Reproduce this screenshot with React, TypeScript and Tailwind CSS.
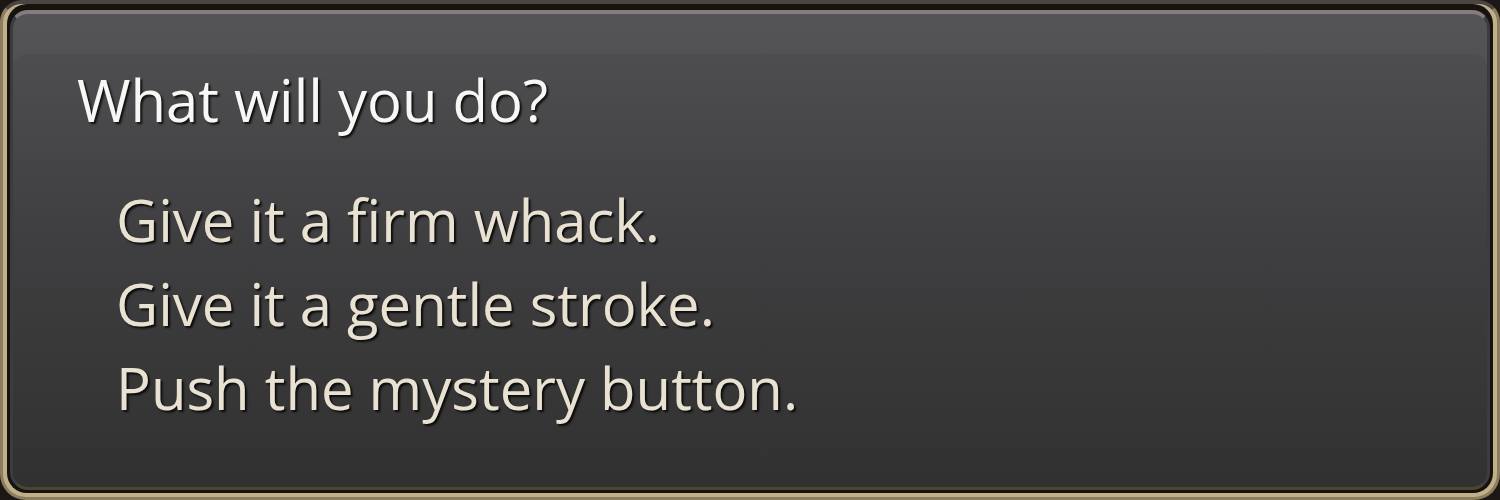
export default function App() {
  const options = ["Give it a firm whack.", "Give it a gentle stroke.", "Push the mystery button."]

  return (
    <div className="w-[1500px] h-[500px] overflow-hidden bg-[#1c1714] font-['Open_Sans','Noto_Sans',sans-serif]">
      {/* gold frame */}
      <div className="h-[500px] rounded-b-[26px] rounded-t-[22px] border-[3px] border-t-[4px] border-[#8c7d5e] border-t-[#4a4442] bg-[#bfb089] px-[4px] pb-[4px]">
        {/* dark ring */}
        <div className="h-full rounded-[20px] bg-[#16120e] px-[3px] pt-[6px] pb-[3px]">
          {/* panel */}
          <div className="h-full rounded-[18px] border-[3px] border-t-[4px] border-[#3b3c42] border-t-[#857d7c] border-b-[#4a4630] bg-gradient-to-b from-[#515153] via-[#3e3e40] to-[#313131] shadow-[inset_0_40px_0_rgba(255,255,255,0.025)]">
            <div className="pl-[64px] pt-[44px]">
              <h1 className="text-[58px] font-medium leading-[84px] text-[#f7f7f5] [text-shadow:2px_2px_2px_#111]">
                What will you do?
              </h1>
              <div className="mt-[36px] pl-[39px]">
                {options.map((o) => (
                  <div
                    key={o}
                    className="text-[58px] font-medium leading-[84px] text-[#e9e2d2] [text-shadow:2px_2px_2px_#0c0c0c]"
                  >
                    {o}
                  </div>
                ))}
              </div>
            </div>
          </div>
        </div>
      </div>
    </div>
  )
}
